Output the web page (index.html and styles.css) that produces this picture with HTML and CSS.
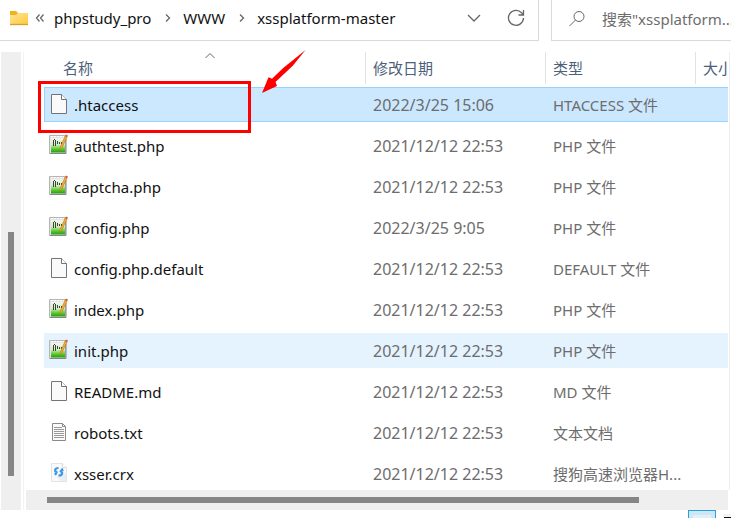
FILE: index.html
```html
<!DOCTYPE html>
<html lang="zh-CN">
<head>
<meta charset="utf-8">
<meta name="viewport" content="width=device-width, initial-scale=1">
<title>xssplatform-master</title>
<link rel="stylesheet" href="styles.css">
</head>
<body>
<svg class="defs" aria-hidden="true">
  <symbol id="page" viewBox="0 0 20 22">
    <path d="M2.500 1.500h10l5 5v14h-15z" fill="#fafafa" stroke="#747474"/>
    <path d="M12.500 1.500v5h5" fill="#fff" stroke="#747474"/>
  </symbol>
  <symbol id="php" viewBox="0 0 20 22">
    <linearGradient id="green" x1="0" y1="0" x2="0" y2="1"><stop offset="0" stop-color="#f2f7f0"/><stop offset=".45" stop-color="#d3ecc4"/><stop offset=".75" stop-color="#5fcc2d"/><stop offset="1" stop-color="#229a12"/></linearGradient>
    <path d="M.5 1.500h16v18H.5z" fill="#e4e4e4" stroke="#b5b5b5"/>
    <path d="M2 4h14v14.500H2z" fill="url(#green)"/>
    <path d="M1 19.500h16V5" fill="none" stroke="#858585"/>
    <path d="M2 2.500h13" stroke="#fff" stroke-dasharray="2 1"/>
    <path d="M4.500 12V6M6.500 6v6M5 5.500h1M8.500 7v3M10.500 8v2M12.500 8v2" stroke="#3a4636"/>
    <path d="M18 3l-5.500 11.500-1.500 1.500.2-2.500L16.200 2z" fill="#f6b42c" stroke="#ba6d18" stroke-width=".6"/>
    <path d="M16.200 2l.8-1.500 2 1-1 2z" fill="#d35d4c"/>
  </symbol>
  <symbol id="text" viewBox="0 0 20 22">
    <path d="M3.500 2.500h10l3 3v14h-13z" fill="#fafafa" stroke="#8a8a8a"/>
    <path d="M13.500 2.500v3h3" fill="none" stroke="#8a8a8a"/>
    <path d="M5 6.500h8M5 8.500h10M5 10.500h10M5 12.500h10M5 14.500h10M5 16.500h10" stroke="#999"/>
  </symbol>
  <symbol id="crx" viewBox="0 0 20 22">
    <path d="M2.500 1.500h11l4 4v14h-15z" fill="#f9f9f9" stroke="#e3e3e3"/>
    <path d="M13.500 1.500v4h4" fill="#fff" stroke="#dcdcdc"/>
    <path d="M8 15l6-6 3 4v6h-5z" fill="#e9eef3"/>
    <path d="M9.500 6C5.500 6 5 9.500 8.500 10.800M9.500 13.500c4.500 0 4.500-3.500 1.300-4.800M12.500 6.500l1.500 2.500M6 11l1.200 2" fill="none" stroke="#3c97e8" stroke-width="2.200"/>
  </symbol>
</svg>

<div class="window">
  <header class="toolbar">
    <nav class="address" aria-label="路径">
      <svg class="folder" viewBox="0 0 20 16" aria-hidden="true">
        <linearGradient id="gold" x1="0" y1="0" x2="1" y2="1"><stop offset="0" stop-color="#ffe49a"/><stop offset="1" stop-color="#ffca3a"/></linearGradient>
        <path d="M1 1h6l2 2h9v11H1z" fill="#f5b31b"/>
        <path d="M1 5h6l2-2h10v11.500H1z" fill="url(#gold)"/>
        <path d="M1 14.500h18" stroke="#dca02a"/>
      </svg>
      <svg class="more" viewBox="0 0 10 10" aria-hidden="true"><path d="M4.500 1.500L1.500 5l3 3.500M8.500 1.500L5.500 5l3 3.500"/></svg>
      <a href="#">phpstudy_pro</a>
      <svg class="next" viewBox="0 0 6 10" aria-hidden="true"><path d="M1 1.500L4.500 5 1 8.500"/></svg>
      <a href="#">WWW</a>
      <svg class="next" viewBox="0 0 6 10" aria-hidden="true"><path d="M1 1.500L4.500 5 1 8.500"/></svg>
      <a href="#">xssplatform-master</a>
      <button class="tool push" type="button" aria-label="历史"><svg viewBox="0 0 20 20"><path d="M4 7l6 6 6-6"/></svg></button>
      <button class="tool" type="button" aria-label="刷新"><svg viewBox="0 0 20 20"><path d="M17.500 10A7.500 7.500 0 1 1 15.500 4.700L17 6.500M17.500 2v5h-5"/></svg></button>
    </nav>
    <label class="search">
      <svg viewBox="0 0 18 18" aria-hidden="true"><circle cx="11" cy="6.500" r="5"/><path d="M7.500 10L1.500 16"/></svg>
      <input type="text" aria-label="搜索" placeholder="搜索&quot;xssplatform...">
    </label>
  </header>

  <main class="content">
    <div class="vscroll"><div class="vthumb"></div></div>
    <section class="pane">
      <div class="list">
        <table>
          <colgroup><col class="c-name"><col class="c-date"><col class="c-type"><col></colgroup>
          <thead>
            <tr>
              <th><button type="button">名称<svg class="caret" viewBox="0 0 12 8" aria-hidden="true"><path d="M1.500 6L6 1.500 10.500 6"/></svg></button></th>
              <th><button type="button">修改日期</button></th>
              <th><button type="button">类型</button></th>
              <th><button type="button">大小</button></th>
            </tr>
          </thead>
          <tbody>
            <tr class="selected"><td><span class="file"><svg class="icon"><use href="#page"/></svg>.htaccess</span></td><td>2022/3/25 15:06</td><td>HTACCESS 文件</td><td></td></tr>
            <tr><td><span class="file"><svg class="icon"><use href="#php"/></svg>authtest.php</span></td><td>2021/12/12 22:53</td><td>PHP 文件</td><td></td></tr>
            <tr><td><span class="file"><svg class="icon"><use href="#php"/></svg>captcha.php</span></td><td>2021/12/12 22:53</td><td>PHP 文件</td><td></td></tr>
            <tr><td><span class="file"><svg class="icon"><use href="#php"/></svg>config.php</span></td><td>2022/3/25 9:05</td><td>PHP 文件</td><td></td></tr>
            <tr><td><span class="file"><svg class="icon"><use href="#page"/></svg>config.php.default</span></td><td>2021/12/12 22:53</td><td>DEFAULT 文件</td><td></td></tr>
            <tr><td><span class="file"><svg class="icon"><use href="#php"/></svg>index.php</span></td><td>2021/12/12 22:53</td><td>PHP 文件</td><td></td></tr>
            <tr class="hovered"><td><span class="file"><svg class="icon"><use href="#php"/></svg>init.php</span></td><td>2021/12/12 22:53</td><td>PHP 文件</td><td></td></tr>
            <tr><td><span class="file"><svg class="icon"><use href="#page"/></svg>README.md</span></td><td>2021/12/12 22:53</td><td>MD 文件</td><td></td></tr>
            <tr><td><span class="file"><svg class="icon"><use href="#text"/></svg>robots.txt</span></td><td>2021/12/12 22:53</td><td>文本文档</td><td></td></tr>
            <tr><td><span class="file"><svg class="icon"><use href="#crx"/></svg>xsser.crx</span></td><td>2021/12/12 22:53</td><td>搜狗高速浏览器H...</td><td></td></tr>
          </tbody>
        </table>
      </div>
      <div class="hscroll"><div class="hthumb"></div></div>
      <div class="mark"></div>
      <svg class="arrow" viewBox="0 0 44 44" aria-hidden="true"><path d="M43.500 0L31 15.500 13.500 32l1.500 4L0 43 6.500 27.300l3.500 1.500 11.500-11z"/></svg>
    </section>
  </main>

  <footer class="status">
    <button class="view active" type="button" aria-label="详细信息"></button>
    <button class="view tiles" type="button" aria-label="大图标"></button>
  </footer>
</div>
</body>
</html>
```
FILE: styles.css
```css
* { box-sizing: border-box; }

body {
  margin: 0;
  background: #fff;
  color: #111;
  font: 15px/20px "Noto Sans", "Noto Sans CJK SC", sans-serif;
}

button {
  margin: 0;
  padding: 0;
  border: 0;
  background: none;
  color: inherit;
  font: inherit;
}

.defs { position: absolute; width: 0; height: 0; }

.window {
  display: flex;
  flex-direction: column;
  height: 100vh;
  overflow: hidden;
}

/* Address bar and search */
.toolbar { display: flex; gap: 12px; height: 41px; flex: none; }

.address {
  display: flex;
  align-items: center;
  flex: 1;
  min-width: 0;
  padding: 0 12px 4px 9px;
  border: solid #d9d9d9;
  border-width: 0 1px 1px 0;
}
.address a { color: #111; text-decoration: none; white-space: nowrap; }
.address svg, .search svg { flex: none; fill: none; stroke: #666; stroke-width: 1.3; }
.address .folder { width: 20px; height: 16px; stroke: none; }
.more { width: 10px; height: 10px; margin: 0 9px 0 6px; }
.next { width: 6px; height: 10px; margin: 0 12px 0 14px; }
.tool { width: 20px; height: 20px; margin-left: 22px; }
.tool svg { display: block; width: 20px; height: 20px; }
.push { margin-left: auto; }

.search {
  display: flex;
  align-items: center;
  gap: 16px;
  width: 180px;
  padding: 0 0 2px 16px;
  border: solid #d9d9d9;
  border-width: 0 0 1px 1px;
}
.search svg { width: 18px; height: 18px; stroke-width: 1; }
.search input {
  flex: 1;
  min-width: 0;
  padding: 0;
  border: 0;
  outline: 0;
  background: none;
  font: inherit;
}
.search input::placeholder { color: #6d6d6d; opacity: 1; }

/* File pane */
.content { display: flex; flex: 1; min-height: 0; padding: 11px 1px 0; }

.vscroll { width: 20px; flex: none; padding: 180px 7px 0; background: #efefef; }
.vthumb { width: 6px; height: 244px; background: #868686; }

.pane {
  position: relative;
  display: flex;
  flex-direction: column;
  flex: 1;
  min-width: 0;
  margin-left: 2px;
  border-left: 1px solid #f3f3f3;
}
.list {
  flex: 1;
  min-height: 0;
  overflow: hidden;
  padding: 0 1px 0 20px;
  border-right: 1px solid #efefef;
}
table { width: 100%; table-layout: fixed; border-collapse: separate; border-spacing: 0; }
.c-name { width: 322px; }
.c-date { width: 180px; }
.c-type { width: 150px; }

th {
  height: 32px;
  padding: 0 0 0 7px;
  border-right: 1px solid #e2e2e2;
  overflow: hidden;
  color: #4c607a;
  font-weight: 400;
  text-align: left;
  white-space: nowrap;
}
th:first-child { padding-left: 10px; }
th:last-child { border-right: 0; }
th button { position: relative; display: block; width: 100%; height: 32px; text-align: left; }
th:first-child button { padding-left: 9px; }
.caret {
  position: absolute;
  top: 0;
  left: 50%;
  width: 12px;
  height: 8px;
  margin-left: -6px;
  fill: none;
  stroke: #666;
}

td {
  height: 41px;
  padding: 0 0 0 7px;
  border: solid transparent;
  border-width: 3px 0;
  background-clip: padding-box;
  color: #6d6d6d;
  white-space: nowrap;
}
td:nth-child(2) { font-size: 16px; }
td:first-child { padding-left: 5px; color: #111; }
.file { display: flex; align-items: center; gap: 5px; height: 22px; }
.icon { width: 20px; height: 22px; flex: none; margin-top: -2px; }
.selected td { background-color: #cce8ff; box-shadow: inset 0 1px #99d1ff, inset 0 -1px #99d1ff; }
.selected td:first-child { box-shadow: inset 1px 1px #99d1ff, inset 0 -1px #99d1ff; }
.hovered td { background-color: #e5f3ff; }

.hscroll { height: 20px; flex: none; margin: 0 2px; padding: 7px 0 7px 21px; background: #efefef; }
.hthumb { width: 87%; height: 6px; background: #868686; }

/* Annotation laid over the list */
.mark {
  position: absolute;
  top: 29px;
  left: 14px;
  width: 213px;
  height: 52px;
  border: 3px solid #f00;
}
.arrow { position: absolute; top: -2px; left: 238px; width: 44px; height: 44px; fill: #f00; }

/* View switcher */
.status { display: flex; gap: 7px; justify-content: flex-end; height: 8px; flex: none; overflow: hidden; }
.view { width: 28px; height: 22px; flex: none; }
.active { border: 1px solid #26a0da; background: #cce8f7; box-shadow: inset 0 0 0 4px #cce8f7, inset 0 0 0 20px #e3eef5; }
.tiles { width: 8px; margin-top: 4px; border: solid #f3f3f3; border-width: 3px 0 0 1px; background: #111; }
```
